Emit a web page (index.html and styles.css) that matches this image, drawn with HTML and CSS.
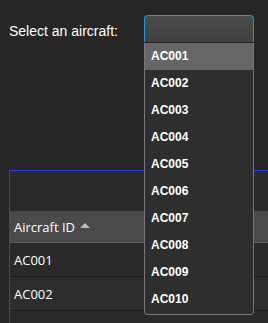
FILE: index.html
```html
<!DOCTYPE html>
<html>
<head>
<meta charset="utf-8">
<link rel="stylesheet" href="styles.css">
</head>
<body>
<div class="picker">
  <label class="picker-label">Select an aircraft:</label>
  <div class="combo">
    <div class="combo-input"></div>
    <ul class="combo-list">
      <li class="combo-item is-active">AC001</li>
      <li class="combo-item">AC002</li>
      <li class="combo-item">AC003</li>
      <li class="combo-item">AC004</li>
      <li class="combo-item">AC005</li>
      <li class="combo-item">AC006</li>
      <li class="combo-item">AC007</li>
      <li class="combo-item">AC008</li>
      <li class="combo-item">AC009</li>
      <li class="combo-item">AC010</li>
    </ul>
  </div>
</div>
<div class="grid">
  <div class="grid-toolbar"></div>
  <div class="grid-header">
    <span class="grid-header-cell">Aircraft ID</span>
    <span class="sort-asc"></span>
  </div>
  <div class="grid-row">AC001</div>
  <div class="grid-row grid-row-alt">AC002</div>
  <div class="grid-row">AC003</div>
</div>
</body>
</html>
```
FILE: styles.css
```css
html, body {
  margin: 0;
  padding: 0;
  background: #262626;
  overflow: hidden;
}
body {
  width: 268px;
  height: 323px;
}
.picker {
  display: flex;
  align-items: center;
  padding: 15px 0 0 9px;
  gap: 25px;
}
.picker-label {
  font-family: "Liberation Sans", Arial, sans-serif;
  font-size: 14px;
  color: #ffffff;
  width: 110px;
  line-height: 16px;
  padding-top: 4px;
}
.combo {
  position: relative;
  width: 110px;
  height: 27px;
  box-sizing: border-box;
  border: 1px solid #1e9ae0;
  border-bottom: none;
  border-radius: 4px 4px 0 0;
  background: linear-gradient(#4c4c4c, #3f3f3f);
}
.combo-input {
  height: 26px;
}
.combo-list {
  position: absolute;
  top: 27px;
  left: -1px;
  width: 110px;
  box-sizing: border-box;
  margin: 0;
  padding: 0 0 1px 0;
  list-style: none;
  background: #2e2e2e;
  border: 1px solid #777777;
  border-top: none;
  border-radius: 0 0 4px 4px;
  z-index: 2;
}
.combo-item {
  height: 27px;
  line-height: 27px;
  padding-left: 6px;
  font-family: "Liberation Sans", Arial, sans-serif;
  font-size: 12px;
  font-weight: bold;
  color: #ffffff;
}
.combo-item.is-active {
  background: #666666;
}
.grid {
  margin: 128px 0 0 9px;
  border-top: 1px solid #2f3fe0;
  border-left: 1px solid #2f3fe0;
  background: #2a2a2a;
  font-family: "Open Sans", "Noto Sans", sans-serif;
  color: #ffffff;
}
.grid-toolbar {
  height: 40px;
}
.grid-header {
  display: flex;
  align-items: center;
  gap: 5px;
  height: 32px;
  box-sizing: border-box;
  padding-left: 4px;
  background: #4a4a4a;
  border-bottom: 1px solid #5c5c5c;
  font-size: 13px;
}
.sort-asc {
  width: 0;
  height: 0;
  border-left: 5px solid transparent;
  border-right: 5px solid transparent;
  border-bottom: 5px solid #bdbdbd;
  margin-top: -2px;
}
.grid-row {
  height: 34px;
  box-sizing: border-box;
  display: flex;
  align-items: center;
  padding-left: 4px;
  font-size: 13px;
  border-bottom: 1px solid #1c1c1c;
  background: #2a2a2a;
}
.grid-row-alt {
  background: #2d2d2d;
}
```
